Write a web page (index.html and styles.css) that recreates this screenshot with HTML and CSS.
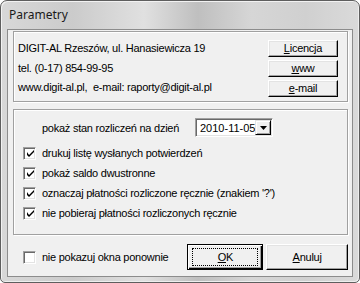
FILE: index.html
```html
<!DOCTYPE html>
<html lang="pl">
<head>
<meta charset="utf-8">
<title>Parametry</title>
<link rel="stylesheet" href="styles.css">
</head>
<body>
<div class="window">
  <div class="titlebar"><span class="title">Parametry</span></div>
  <div class="client">
    <div class="group group-info">
      <div class="info-text">
        <div class="line">DIGIT-AL Rzeszów, ul. Hanasiewicza 19</div>
        <div class="line">tel. (0-17) 854-99-95</div>
        <div class="line">www.digit-al.pl,&nbsp; e-mail: raporty@digit-al.pl</div>
      </div>
      <div class="info-buttons">
        <div class="btn small"><u>L</u>icencja</div>
        <div class="btn small"><u>w</u>ww</div>
        <div class="btn small"><u>e</u>-mail</div>
      </div>
    </div>
    <div class="group group-options">
      <div class="date-row">
        <span class="date-label">pokaż stan rozliczeń na dzień</span>
        <div class="combo">
          <span class="combo-value">2010-11-05</span>
          <span class="combo-arrow"><svg width="7" height="4" viewBox="0 0 7 4"><path d="M0 0h7L3.5 4z" fill="#000"/></svg></span>
        </div>
      </div>
      <div class="check-row"><span class="check on"><svg width="7" height="7" viewBox="0 0 7 7"><path d="M0 2v3l2 2 5-5V0L2 5z" fill="#000"/></svg></span><span>drukuj listę wysłanych potwierdzeń</span></div>
      <div class="check-row"><span class="check on"><svg width="7" height="7" viewBox="0 0 7 7"><path d="M0 2v3l2 2 5-5V0L2 5z" fill="#000"/></svg></span><span>pokaż saldo dwustronne</span></div>
      <div class="check-row"><span class="check on"><svg width="7" height="7" viewBox="0 0 7 7"><path d="M0 2v3l2 2 5-5V0L2 5z" fill="#000"/></svg></span><span>oznaczaj płatności rozliczone ręcznie (znakiem '?')</span></div>
      <div class="check-row"><span class="check on"><svg width="7" height="7" viewBox="0 0 7 7"><path d="M0 2v3l2 2 5-5V0L2 5z" fill="#000"/></svg></span><span>nie pobieraj płatności rozliczonych ręcznie</span></div>
    </div>
    <div class="bottom-row">
      <div class="check-row bottom-check"><span class="check"></span><span>nie pokazuj okna ponownie</span></div>
      <div class="btn big default"><span class="focus"><u>O</u>K</span></div>
      <div class="btn big cancel"><u>A</u>nuluj</div>
    </div>
  </div>
</div>
</body>
</html>
```

FILE: styles.css
```css
html, body {
  margin: 0;
  padding: 0;
  background: #ffffff;
}
body {
  font-family: "Liberation Sans", Arial, sans-serif;
  font-size: 11px;
  letter-spacing: -0.25px;
  color: #000;
  white-space: nowrap;
}
.window {
  box-sizing: border-box;
  width: 360px;
  height: 283px;
  border: 1px solid #5e5e5e;
  border-radius: 7px 7px 5px 5px;
  padding: 0 6px 5px 6px;
  background: linear-gradient(90deg, #d8d8d8 0%, #cbcbcb 20%, #e0e0e0 40%, #bfbfbf 55%, #d6d6d6 70%, #d0d0d0 85%, #dadada 100%);
  box-shadow: inset 1px 1px 0 #f2f2f2, inset -1px -1px 0 #eeeeee;
  display: flex;
  flex-direction: column;
}
.titlebar {
  height: 28px;
  display: flex;
  align-items: center;
  padding-left: 2px;
}
.title {
  font-family: "Noto Sans", "Open Sans", sans-serif;
  font-size: 12px;
  letter-spacing: 0;
  color: #1a1a1a;
  margin-top: -1px;
}
.client {
  flex: 1;
  border: 1px solid #8c8c8c;
  background: #f0f0f0;
  display: flex;
  flex-direction: column;
  padding: 1px 4px 0 5px;
}
.group {
  border: 1px solid #a0a0a0;
  box-shadow: inset 1px 1px 0 #ffffff, 1px 1px 0 #ffffff;
}
.group-info {
  height: 69px;
  display: flex;
  justify-content: space-between;
  padding: 0 9px 0 4px;
}
.info-text {
  display: flex;
  flex-direction: column;
  padding-top: 7px;
}
.line {
  height: 19.5px;
  line-height: 18px;
}
.info-buttons {
  display: flex;
  flex-direction: column;
  gap: 3px;
  padding-top: 8px;
}
.btn {
  box-sizing: border-box;
  background: #f0f0f0;
  border-top: 1px solid #ffffff;
  border-left: 1px solid #ffffff;
  border-right: 1px solid #000;
  border-bottom: 1px solid #000;
  box-shadow: inset -1px -1px 0 #a0a0a0, inset 1px 1px 0 #e3e3e3;
  display: flex;
  align-items: center;
  justify-content: center;
  font-size: 11px;
}
.btn.small {
  width: 70px;
  height: 17px;
  padding-bottom: 1px;
}
.group-options {
  margin-top: 7px;
  height: 124px;
  padding: 0 0 0 9px;
  display: flex;
  flex-direction: column;
}
.date-row {
  display: flex;
  align-items: center;
  height: 19px;
  margin-top: 8px;
  margin-bottom: 6px;
}
.date-label {
  margin-left: 19px;
  width: 153px;
}
.combo {
  box-sizing: border-box;
  width: 78px;
  height: 19px;
  background: #fff;
  border-top: 1px solid #a0a0a0;
  border-left: 1px solid #a0a0a0;
  border-right: 1px solid #fff;
  border-bottom: 1px solid #fff;
  box-shadow: inset 1px 1px 0 #696969, inset -1px -1px 0 #e3e3e3;
  display: flex;
  align-items: center;
  justify-content: space-between;
  padding: 1px 1px 1px 4px;
  font-size: 11px;
  letter-spacing: 0;
}
.combo-arrow {
  box-sizing: border-box;
  width: 16px;
  height: 15px;
  background: #f0f0f0;
  border-top: 1px solid #e3e3e3;
  border-left: 1px solid #e3e3e3;
  border-right: 1px solid #000;
  border-bottom: 1px solid #000;
  box-shadow: inset 1px 1px 0 #fff, inset -1px -1px 0 #a0a0a0;
  display: flex;
  align-items: center;
  justify-content: center;
}
.check-row {
  display: flex;
  align-items: center;
  height: 20px;
}
.check {
  box-sizing: border-box;
  width: 13px;
  height: 13px;
  margin-right: 6px;
  background: #fff;
  border-top: 1px solid #a0a0a0;
  border-left: 1px solid #a0a0a0;
  border-right: 1px solid #fff;
  border-bottom: 1px solid #fff;
  box-shadow: inset 1px 1px 0 #696969, inset -1px -1px 0 #e3e3e3;
  display: flex;
  align-items: center;
  justify-content: center;
  flex-shrink: 0;
}
.check svg {
  margin-left: 1px;
  margin-top: 1px;
}
.bottom-row {
  display: flex;
  align-items: center;
  margin-top: 9px;
}
.bottom-check {
  margin-left: 10px;
  width: 165px;
  height: 26px;
}
.btn.big {
  height: 26px;
  font-size: 11px;
}
.btn.default {
  width: 76px;
  margin-right: 3px;
  border: 1px solid #000;
  box-shadow: inset 1px 1px 0 #fff, inset -1px -1px 0 #000, inset -2px -2px 0 #a0a0a0;
}
.btn.cancel {
  width: 82px;
}
.btn.default .focus {
  box-sizing: border-box;
  width: 66px;
  height: 18px;
  border: 1px dotted #000;
  display: flex;
  align-items: center;
  justify-content: center;
}
```
